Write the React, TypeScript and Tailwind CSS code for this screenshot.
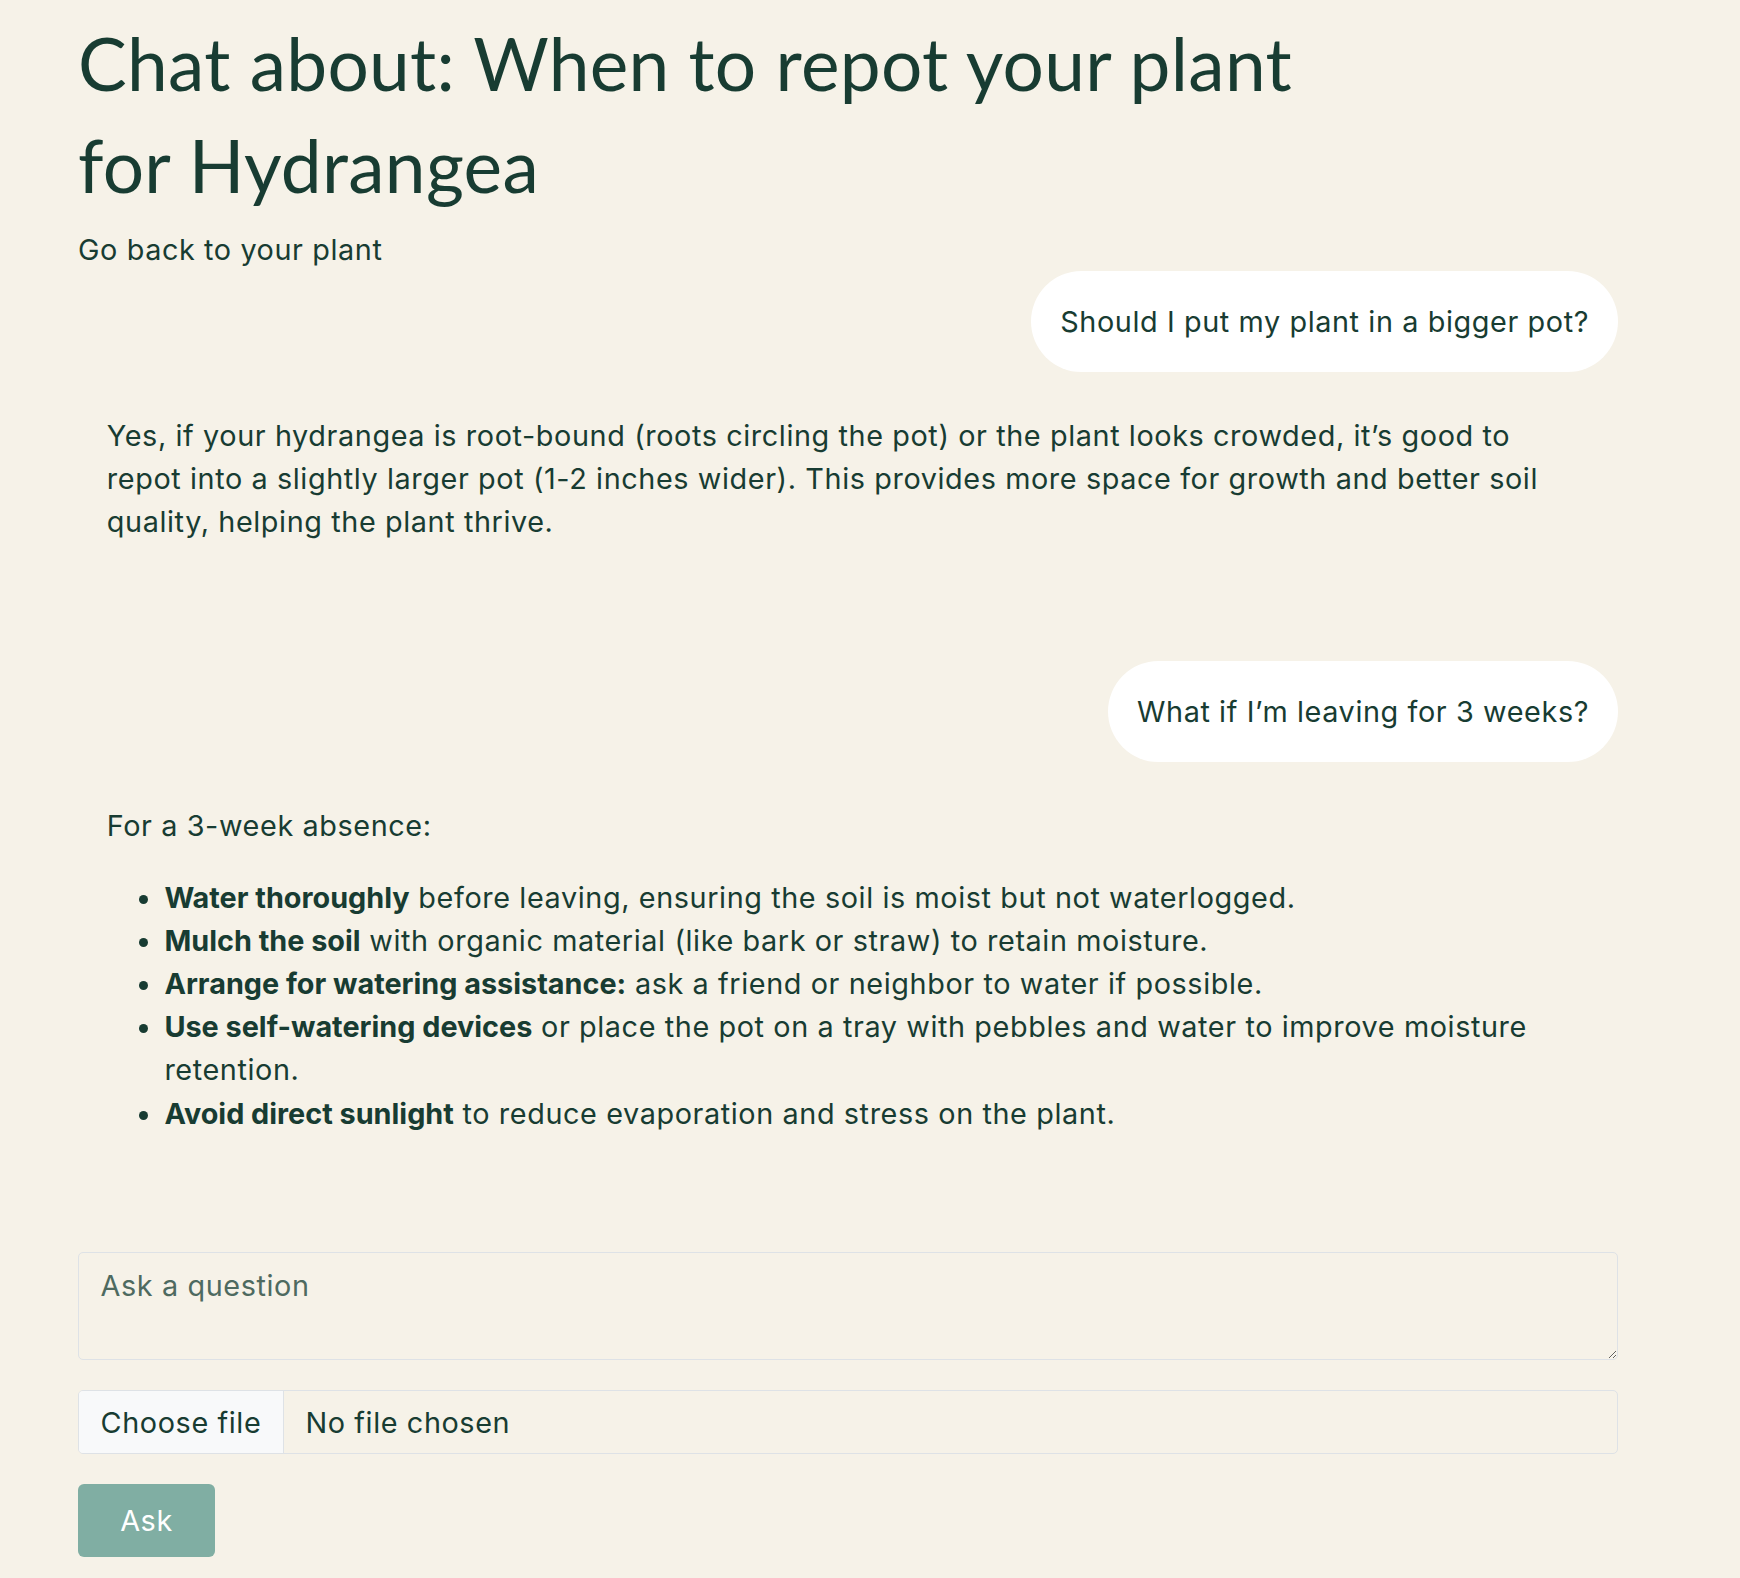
const messages = [
  { role: 'user', text: 'Should I put my plant in a bigger pot?' },
  { role: 'assistant', kind: 'repot' },
  { role: 'user', text: 'What if I’m leaving for 3 weeks?' },
  { role: 'assistant', kind: 'absence' },
];

const tips = [
  { bold: 'Water thoroughly', rest: ' before leaving, ensuring the soil is moist but not waterlogged.' },
  { bold: 'Mulch the soil', rest: ' with organic material (like bark or straw) to retain moisture.' },
  { bold: 'Arrange for watering assistance:', rest: ' ask a friend or neighbor to water if possible.' },
  {
    bold: 'Use self-watering devices',
    rest: ' or place the pot on a tray with pebbles and water to improve moisture retention.',
  },
  { bold: 'Avoid direct sunlight', rest: ' to reduce evaporation and stress on the plant.' },
];

function UserBubble({ text }: { text: string }) {
  return (
    <div className="flex justify-end mb-[13px]">
      <div className="bg-white rounded-full px-[29px] py-[28.8px]">{text}</div>
    </div>
  );
}

function AssistantMessage({ kind }: { kind: string }) {
  return (
    <div className="pl-[28.8px] pr-[60px] py-[28.8px] mb-[60px]">
      {kind === 'repot' ? (
        <p className="mb-[28.8px]">
          Yes, if your hydrangea is root-bound (roots circling the pot) or the plant looks crowded, it’s good to
          repot into a slightly larger pot (1-2 inches wider). This provides more space for growth and better soil
          quality, helping the plant thrive.
        </p>
      ) : (
        <>
          <p className="mb-[28.8px]">For a 3-week absence:</p>
          <ul className="list-disc pl-[57.6px] mb-[28.8px]">
            {tips.map((t) => (
              <li key={t.bold}>
                <strong className="font-bold tracking-normal">{t.bold}</strong>
                {t.rest}
              </li>
            ))}
          </ul>
        </>
      )}
    </div>
  );
}

export default function App() {
  return (
    <div className="min-h-screen bg-[#f6f2e8] text-[#183c32] font-['Inter',sans-serif] text-[28.8px] leading-[43.2px] tracking-[0.6px]">
      <div className="ml-[78px] w-[1540px] pt-[12px] pb-[20px]">
        <h1 className="font-['Lato',sans-serif] text-[73px] leading-[102px] tracking-[0.3px] font-normal max-w-[1270px] mb-[12px]">
          Chat about: When to repot your plant for Hydrangea
        </h1>
        <a href="#" className="block">
          Go back to your plant
        </a>

        {/* Conversation */}
        {messages.map((m, i) =>
          m.role === 'user' ? (
            <UserBubble key={i} text={m.text!} />
          ) : (
            <AssistantMessage key={i} kind={m.kind!} />
          )
        )}

        {/* Ask form */}
        <form onSubmit={(e) => e.preventDefault()}>
          <textarea
            placeholder="Ask a question"
            className="block w-full h-[108px] mb-[30px] px-[21.6px] py-[10.8px] bg-transparent border border-[#dee2e6] rounded-[5px] placeholder:text-[#4e6a60] outline-none resize-y"
          />
          <label className="flex h-[64px] mb-[30px] border border-[#dee2e6] rounded-[5px] overflow-hidden cursor-pointer">
            <span className="flex items-center px-[21.6px] bg-[#f8f9fa] border-r border-[#dee2e6]">Choose file</span>
            <span className="flex items-center px-[21.6px]">No file chosen</span>
            <input type="file" className="hidden" />
          </label>
          <button
            type="submit"
            className="w-[137px] h-[73px] rounded-[6px] bg-[#80aea3] text-white"
          >
            Ask
          </button>
        </form>
      </div>
    </div>
  );
}
